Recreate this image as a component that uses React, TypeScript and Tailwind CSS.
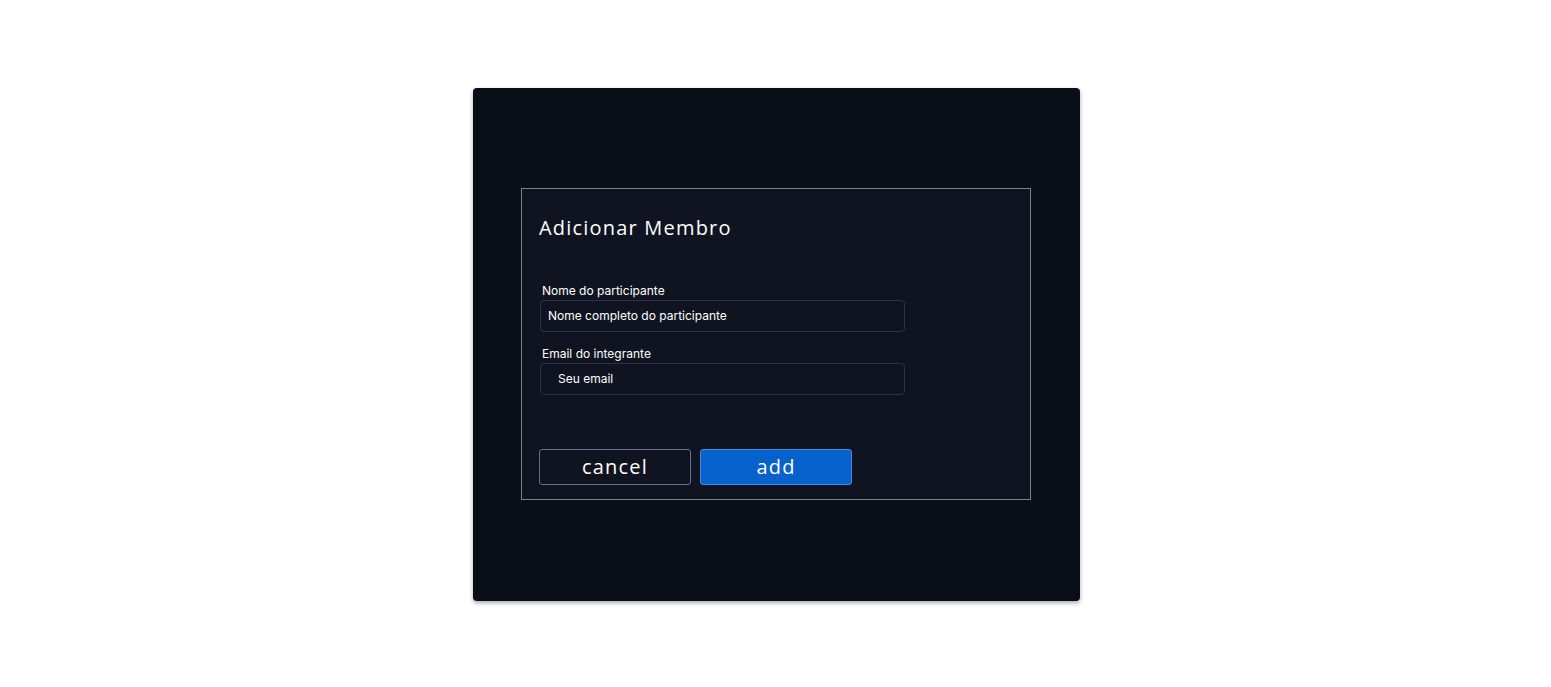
export default function App() {
  return (
    <div className="min-h-screen bg-white pt-[88px] pl-[2px] flex justify-center">
      <div className="w-[607px] h-[513px] bg-[#0a0e18] rounded-[4px] shadow-[0_2px_4px_rgba(0,0,0,0.35)] pt-[100px] pl-[48px]">
        <div className="w-[510px] h-[312px] border border-[#7d8190] bg-[#0f1420] px-[17px] pt-[25px]">
          <h2 className="text-[20px] leading-[28px] tracking-[0.06em] text-white font-['Open_Sans',sans-serif]">
            Adicionar Membro
          </h2>
          <div className="mt-[41px] font-['Inter',sans-serif] text-[12px] text-white">
            <label className="block pl-[3px] leading-[16px]">Nome do participante</label>
            <div className="mt-[1px] ml-[1px] w-[365px] h-[32px] border border-[#2c3243] rounded-[4px] flex items-center pl-[7px]">
              Nome completo do participante
            </div>
            <label className="block pl-[3px] mt-[14px] leading-[16px]">Email do integrante</label>
            <div className="mt-[1px] ml-[1px] w-[365px] h-[32px] border border-[#2c3243] rounded-[4px] flex items-center pl-[17px]">
              Seu email
            </div>
          </div>
          <div className="mt-[54px] flex gap-[9px] font-['Open_Sans',sans-serif] text-[20px] tracking-[0.06em] text-white">
            <button className="w-[152px] h-[36px] border border-[#6a6d99] rounded-[3px] bg-[#0f1420] flex items-center justify-center">
              cancel
            </button>
            <button className="w-[152px] h-[36px] border border-[#4d86d6] rounded-[3px] bg-[#0561cc] flex items-center justify-center">
              add
            </button>
          </div>
        </div>
      </div>
    </div>
  );
}
